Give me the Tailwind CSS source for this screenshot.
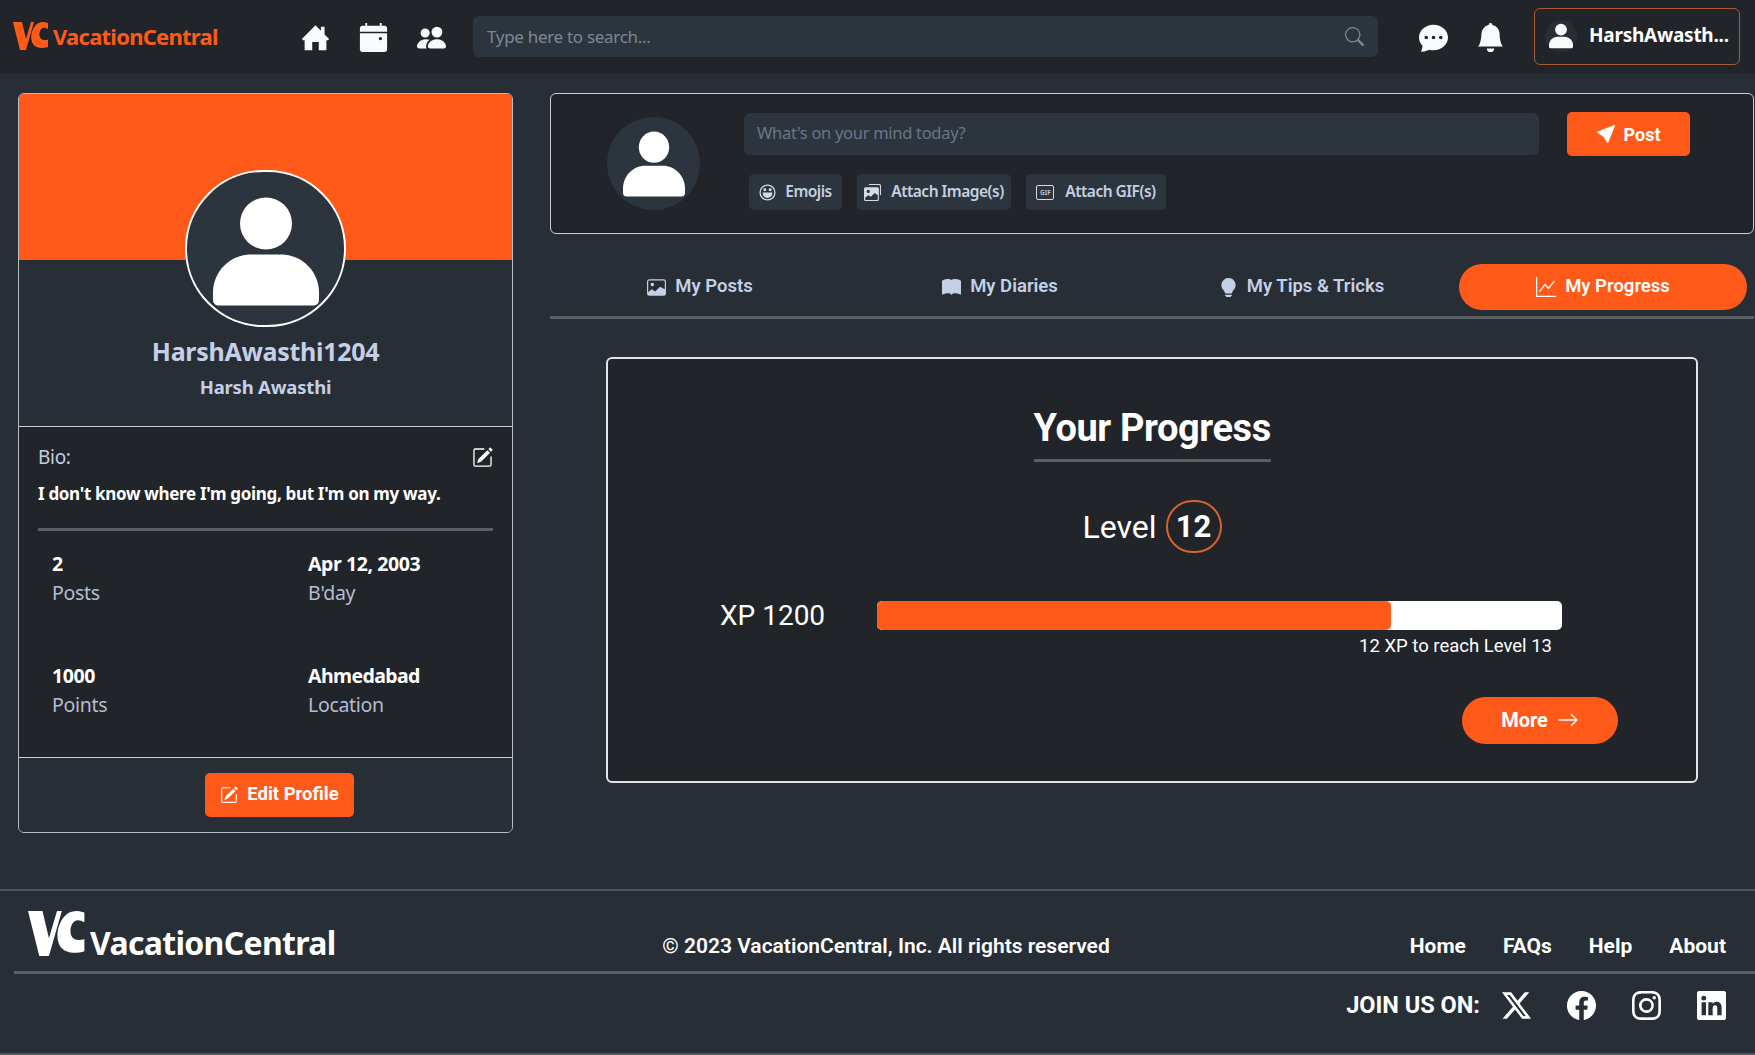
<!DOCTYPE html>
<html lang="en">
<head>
<meta charset="UTF-8" />
<title>VacationCentral - Profile</title>
<script src="https://cdn.jsdelivr.net/npm/@tailwindcss/browser@4"></script>
</head>
<body class="bg-[#282e36] font-['Noto_Sans',sans-serif] text-white">
<div class="w-[1755px] h-[1055px] overflow-hidden flex flex-col">

  <!-- navbar -->
  <header class="h-[74px] shrink-0 bg-[#212529] flex items-center pl-[13px] pr-[15px]">
    <a class="w-[288px] flex items-center text-[#ff5a1a]">
      <svg viewBox="0 0 36 30" class="w-[36px] h-[30px] shrink-0 -mt-[3px]" fill="currentColor">
        <path d="M0 1h9l4 17 5-17h3L13 29H7z"/>
        <path d="M35 2v6c-2-1-4-1.500-5-1-3 1-4 5-3.500 8 .5 3 3 5 8.500 3.500V26c-6 2-12 1-15-3-3-5-2-13 2-18 3-4 8-5 13-3z"/>
      </svg>
      <span class="ml-[4px] -mt-[2px] text-[22px] font-bold tracking-[-0.75px] leading-none">VacationCentral</span>
    </a>
    <nav class="flex items-center gap-[29px]">
      <svg viewBox="0 0 16 16" class="w-[29px] h-[29px]" fill="#f8fafc"><path d="M8 1.300 11 4.300V2h2v4.300l2.500 2.500-.7.700H14V15H9.800v-4.500H6.200V15H2V9.500h-.8l-.7-.7z"/></svg>
      <svg viewBox="0 0 16 16" class="w-[29px] h-[29px]" fill="#f8fafc"><path d="M3.500 0h1v1.500h7V0h1v1.500H14A1.500 1.500 0 0 1 15.500 3v1.800H.5V3A1.500 1.500 0 0 1 2 1.500h1.500zM.5 5.600h15V14.500A1.500 1.500 0 0 1 14 16H2a1.500 1.500 0 0 1-1.500-1.500zM11.800 7.700a.9.900 0 1 0 0 1.800.9.900 0 0 0 0-1.800z"/></svg>
      <svg viewBox="0 0 16 16" class="w-[29px] h-[29px]" fill="#f8fafc"><path d="M7 14s-1 0-1-1 1-4 5-4 5 3 5 4-1 1-1 1H7Zm4-6a3 3 0 1 0 0-6 3 3 0 0 0 0 6Zm-5.784 6A2.238 2.238 0 0 1 5 13c0-1.355.68-2.750 1.936-3.720A6.325 6.325 0 0 0 5 9c-4 0-5 3-5 4s1 1 1 1h4.216ZM4.500 8a2.500 2.500 0 1 0 0-5 2.500 2.500 0 0 0 0 5Z"/></svg>
    </nav>
    <div class="ml-[27px] -mt-[1px] w-[905px] h-[41px] bg-[#2c343e] rounded-[6px] flex items-center justify-between pl-[14px] pr-[14px]">
      <span class="text-[#7d8797] text-[17px] tracking-[-0.3px]">Type here to search...</span>
      <svg viewBox="0 0 16 16" class="w-[19px] h-[19px]" fill="#7d8797"><path d="M11.742 10.344a6.500 6.500 0 1 0-1.397 1.398h-.001c.03.04.062.078.098.115l3.850 3.850a1 1 0 0 0 1.415-1.414l-3.850-3.850a1.007 1.007 0 0 0-.115-.1zM12 6.500a5.500 5.500 0 1 1-11 0 5.500 5.500 0 0 1 11 0z"/></svg>
    </div>
    <svg viewBox="0 0 16 16" class="ml-[41px] w-[29px] h-[29px]" fill="#f8fafc"><path d="M16 8c0 3.866-3.582 7-8 7a9.060 9.060 0 0 1-2.347-.306c-.584.296-1.925.864-4.181 1.234-.2.032-.352-.176-.273-.362.354-.836.674-1.950.77-2.966C.744 11.370 0 9.760 0 8c0-3.866 3.582-7 8-7s8 3.134 8 7zM5 8a1 1 0 1 0-2 0 1 1 0 0 0 2 0zm4 0a1 1 0 1 0-2 0 1 1 0 0 0 2 0zm3 1a1 1 0 1 0 0-2 1 1 0 0 0 0 2z"/></svg>
    <svg viewBox="0 0 16 16" class="ml-[28px] w-[29px] h-[29px]" fill="#f8fafc"><path d="M8 16a2 2 0 0 0 2-2H6a2 2 0 0 0 2 2zm.995-14.901a1 1 0 1 0-1.990 0A5.002 5.002 0 0 0 3 6c0 1.098-.5 6-2 7h14c-1.500-1-2-5.902-2-7 0-2.420-1.720-4.440-4.005-4.901z"/></svg>
    <button class="ml-[29px] w-[206px] h-[57px] -mt-[2px] border border-[#a85a38] rounded-[6px] flex items-center pl-[10px]">
      <span class="w-[32px] h-[32px] rounded-full bg-[#282e36] flex items-center justify-center">
        <svg viewBox="0 0 106 110" class="w-[24px] h-[26px]" fill="#f8fafc"><circle cx="53" cy="27" r="26"/><path d="M0 103v-7C0 75 17 58 38 58h30c21 0 38 17 38 38v7q0 6-6 6H6q-6 0-6-6z"/></svg>
      </span>
      <span class="ml-[12px] text-[19px] font-bold tracking-[-0.25px] -mt-[2px]">HarshAwasth...</span>
    </button>
  </header>

  <!-- page body -->
  <main class="h-[815px] shrink-0 flex items-start pt-[19px] pl-[18px] pr-[1px] gap-[37px]">

    <!-- profile card -->
    <aside class="w-[495px] h-[740px] shrink-0 border border-[#b9bdc2] rounded-[6px] overflow-hidden flex flex-col">
      <div class="relative h-[166px] shrink-0 bg-[#ff5a1a]">
        <div class="absolute left-[166px] top-[76px] w-[161px] h-[157px] rounded-full border-2 border-white bg-[#2c343d] flex items-center justify-center">
          <svg viewBox="0 0 106 110" class="w-[106px] h-[111px] mt-[6px]" fill="white"><circle cx="53" cy="27" r="26"/><path d="M0 103v-7C0 75 17 58 38 58h30c21 0 38 17 38 38v7q0 6-6 6H6q-6 0-6-6z"/></svg>
        </div>
      </div>
      <div class="h-[167px] shrink-0 bg-[#282e36] flex flex-col items-center pt-[75px] border-b border-[#c9cdd1]">
        <div class="text-[25px] leading-[32px] font-bold text-[#c4d0e6] tracking-[-0.3px]">HarshAwasthi1204</div>
        <div class="mt-[8px] text-[18.500px] leading-[24px] font-bold text-[#c4d0e6] tracking-[-0.2px]">Harsh Awasthi</div>
      </div>
      <div class="h-[331px] shrink-0 bg-[#212529] px-[19px] pt-[17px] border-b border-[#c9cdd1]">
        <div class="flex items-center justify-between h-[26px]">
          <span class="text-[19px] text-[#c4cde0] tracking-[-0.3px]">Bio:</span>
          <svg viewBox="0 0 16 16" class="w-[21px] h-[21px] mt-[1px]" fill="white"><path d="M15.502 1.940a.5.5 0 0 1 0 .706L14.459 3.690l-2-2L13.502.646a.5.5 0 0 1 .707 0l1.293 1.293zm-1.750 2.456-2-2L4.939 9.210a.5.5 0 0 0-.121.196l-.805 2.414a.25.25 0 0 0 .316.316l2.414-.805a.5.5 0 0 0 .196-.12l6.813-6.814z"/><path d="M1 13.500A1.500 1.500 0 0 0 2.500 15h11a1.500 1.500 0 0 0 1.500-1.500v-6a.5.5 0 0 0-1 0v6a.5.5 0 0 1-.5.5h-11a.5.5 0 0 1-.5-.5v-11a.5.5 0 0 1 .5-.5H9a.5.5 0 0 0 0-1H2.500A1.500 1.500 0 0 0 1 2.500v11z"/></svg>
        </div>
        <p class="mt-[12px] text-[17px] leading-[24px] font-bold tracking-[-0.32px]">I don't know where I'm going, but I'm on my way.</p>
        <div class="mt-[22px] h-[3px] bg-[#5a5f64]"></div>
        <div class="mt-[19px] ml-[14px] grid grid-cols-[256px_1fr] gap-y-[54px]">
          <div>
            <div class="text-[19.500px] leading-[28px] font-bold tracking-[-0.4px]">2</div>
            <div class="text-[19.500px] leading-[30px] text-[#b4bdd0] tracking-[-0.3px]">Posts</div>
          </div>
          <div>
            <div class="text-[19.500px] leading-[28px] font-bold tracking-[-0.4px]">Apr 12, 2003</div>
            <div class="text-[19.500px] leading-[30px] text-[#b4bdd0] tracking-[-0.3px]">B'day</div>
          </div>
          <div>
            <div class="text-[19.500px] leading-[28px] font-bold tracking-[-0.4px]">1000</div>
            <div class="text-[19.500px] leading-[30px] text-[#b4bdd0] tracking-[-0.3px]">Points</div>
          </div>
          <div>
            <div class="text-[19.500px] leading-[28px] font-bold tracking-[-0.6px]">Ahmedabad</div>
            <div class="text-[19.500px] leading-[30px] text-[#b4bdd0] tracking-[-0.3px]">Location</div>
          </div>
        </div>
      </div>
      <div class="flex-1 bg-[#282e36] flex items-center pl-[186px]">
        <button class="w-[149px] h-[44px] rounded-[5px] bg-[#ff5a1a] flex items-center justify-center gap-[9px] font-['Roboto',sans-serif] font-bold text-[18.500px]">
          <svg viewBox="0 0 16 16" class="w-[18px] h-[18px]" fill="white"><path d="M15.502 1.940a.5.5 0 0 1 0 .706L14.459 3.690l-2-2L13.502.646a.5.5 0 0 1 .707 0l1.293 1.293zm-1.750 2.456-2-2L4.939 9.210a.5.5 0 0 0-.121.196l-.805 2.414a.25.25 0 0 0 .316.316l2.414-.805a.5.5 0 0 0 .196-.12l6.813-6.814z"/><path d="M1 13.500A1.500 1.500 0 0 0 2.500 15h11a1.500 1.500 0 0 0 1.500-1.500v-6a.5.5 0 0 0-1 0v6a.5.5 0 0 1-.5.5h-11a.5.5 0 0 1-.5-.5v-11a.5.5 0 0 1 .5-.5H9a.5.5 0 0 0 0-1H2.500A1.500 1.500 0 0 0 1 2.500v11z"/></svg>
          Edit Profile
        </button>
      </div>
    </aside>

    <section class="flex-1 min-w-0">
      <!-- composer -->
      <div class="h-[141px] bg-[#212529] border border-[#c9cdd1] rounded-[6px] flex pl-[56px] pt-[18px]">
        <div class="w-[93px] h-[93px] mt-[5px] shrink-0 rounded-full bg-[#2c343d] flex items-center justify-center">
          <svg viewBox="0 0 106 110" class="w-[62px] h-[66px]" preserveAspectRatio="none" fill="white"><circle cx="53" cy="27" r="26"/><path d="M0 103v-7C0 75 17 58 38 58h30c21 0 38 17 38 38v7q0 6-6 6H6q-6 0-6-6z"/></svg>
        </div>
        <div class="ml-[44px] flex-1">
          <div class="flex items-start">
            <div class="w-[795px] h-[42px] mt-[1px] rounded-[6px] bg-[#2c343e] flex items-center pl-[13px] pb-[2px] text-[#6b7686] text-[16.500px] tracking-[-0.3px]">What's on your mind today?</div>
            <button class="ml-[28px] w-[123px] h-[44px] rounded-[5px] bg-[#ff5a1a] flex items-center justify-center gap-[9px] font-['Roboto',sans-serif] font-bold text-[18px]">
              <svg viewBox="0 0 16 16" class="w-[18px] h-[18px]" fill="white"><path d="M15.964.686a.5.5 0 0 0-.65-.65L.767 5.855H.766l-.452.180a.5.5 0 0 0-.082.887l.41.26.001.002 4.995 3.178 3.178 4.995.002.002.26.41a.5.5 0 0 0 .886-.083l6-15Z"/></svg>
              Post
            </button>
          </div>
          <div class="mt-[18px] ml-[5px] flex gap-[15px] text-[15.500px] font-semibold text-[#c4d0e0] tracking-[-0.5px]">
            <div class="w-[93px] h-[36px] rounded-[5px] bg-[#2c343e] flex items-center justify-center gap-[9px]">
              <svg viewBox="0 0 16 16" class="w-[17px] h-[17px]" fill="none" stroke="#d5dce6" stroke-width="1.200"><circle cx="8" cy="8" r="7"/><path d="M4 8.500h8a4 4 0 0 1-8 0z" fill="#d5dce6"/><circle cx="5.500" cy="5.500" r=".8" fill="#d5dce6"/><circle cx="10.500" cy="5.500" r=".8" fill="#d5dce6"/></svg>
              Emojis
            </div>
            <div class="w-[154px] h-[36px] rounded-[5px] bg-[#2c343e] flex items-center justify-center gap-[10px]">
              <svg viewBox="0 0 16 16" class="w-[17px] h-[17px]" fill="#d5dce6"><path d="M4 1.500A1.500 1.500 0 0 1 5.500 0h9A1.500 1.500 0 0 1 16 1.500v8a1.500 1.500 0 0 1-1 1.400V2a1 1 0 0 0-1-1H4.100z"/><path d="M1.500 3A1.500 1.500 0 0 0 0 4.500v10A1.500 1.500 0 0 0 1.500 16h11a1.500 1.500 0 0 0 1.500-1.500v-10A1.500 1.500 0 0 0 12.500 3zM4 5.500a1.500 1.500 0 1 1 0 3 1.500 1.500 0 0 1 0-3zM1 13l3-2.500 2.500 1.500L10 8.500l3 2V14a1 1 0 0 1-1 1H2a1 1 0 0 1-1-1z"/></svg>
              Attach Image(s)
            </div>
            <div class="w-[140px] h-[36px] rounded-[5px] bg-[#2c343e] flex items-center justify-center gap-[11px]">
              <span class="w-[18px] h-[15px] border border-[#d5dce6] rounded-[2px] text-[6.500px] leading-[13px] text-center tracking-normal">GIF</span>
              Attach GIF(s)
            </div>
          </div>
        </div>
      </div>

      <!-- tabs -->
      <div class="mt-[30px] h-[55px] border-b-[3px] border-[#5a5f64] flex font-['Roboto',sans-serif] font-semibold text-[18.500px] text-[#c4d0e6]">
        <div class="w-[300px] h-[46px] flex items-center justify-center gap-[9px]">
          <svg viewBox="0 0 16 16" class="w-[19px] h-[19px]" fill="currentColor"><path d="M.002 3a2 2 0 0 1 2-2h12a2 2 0 0 1 2 2v10a2 2 0 0 1-2 2h-12a2 2 0 0 1-2-2V3zm1 9 2.650-2.350a.5.5 0 0 1 .63-.062l2.660 1.772 3.710-3.710a.5.5 0 0 1 .577-.093L15.002 9.500V3a1 1 0 0 0-1-1h-12a1 1 0 0 0-1 1zm5-6.500a1.500 1.500 0 1 0-3 0 1.500 1.500 0 0 0 3 0z"/></svg>
          My Posts
        </div>
        <div class="w-[300px] h-[46px] flex items-center justify-center gap-[9px]">
          <svg viewBox="0 0 16 16" class="w-[19px] h-[19px]" fill="currentColor"><path d="M8 1.783C7.015.936 5.587.81 4.287.94c-1.514.153-3.042.672-3.994 1.105A.5.5 0 0 0 0 2.500v11a.5.5 0 0 0 .707.455c.882-.4 2.303-.881 3.680-1.020 1.409-.142 2.590.087 3.223.877a.5.5 0 0 0 .78 0c.633-.79 1.814-1.019 3.222-.877 1.378.139 2.800.62 3.681 1.020A.5.5 0 0 0 16 13.500v-11a.5.5 0 0 0-.293-.455c-.952-.433-2.480-.952-3.994-1.105C10.413.809 8.985.936 8 1.783z"/></svg>
          My Diaries
        </div>
        <div class="w-[303px] h-[46px] flex items-center justify-center gap-[9px]">
          <svg viewBox="0 0 16 16" class="w-[19px] h-[19px]" fill="currentColor"><path d="M2 6a6 6 0 1 1 10.174 4.310c-.203.196-.359.4-.453.619l-.762 1.769A.5.5 0 0 1 10.500 13h-5a.5.5 0 0 1-.46-.302l-.761-1.770a1.964 1.964 0 0 0-.453-.618A5.984 5.984 0 0 1 2 6zm3 8.500a.5.5 0 0 1 .5-.5h5a.5.5 0 0 1 0 1l-.224.447a1 1 0 0 1-.894.553H6.618a1 1 0 0 1-.894-.553L5.500 15a.5.5 0 0 1-.5-.5z"/></svg>
          My Tips &amp; Tricks
        </div>
        <div class="w-[288px] h-[46px] ml-[6px] rounded-full bg-[#ff5a1a] text-white flex items-center justify-center gap-[9px]">
          <svg viewBox="0 0 16 16" class="w-[20px] h-[20px]" fill="white"><path d="M0 0h1v15h15v1H0V0Zm14.817 3.113a.5.5 0 0 1 .07.704l-4.500 5.500a.5.5 0 0 1-.74.037L7.060 6.767l-3.656 5.027a.5.5 0 0 1-.808-.588l4-5.500a.5.5 0 0 1 .758-.06l2.609 2.610 4.150-5.073a.5.5 0 0 1 .704-.07Z"/></svg>
          My Progress
        </div>
      </div>

      <!-- progress card -->
      <div class="mt-[38px] ml-[56px] w-[1092px] h-[426px] bg-[#212529] border-2 border-[#e2e4e6] rounded-[6px] font-['Roboto',sans-serif] flex flex-col">
        <div class="mt-[47px] mx-auto w-[237px] border-b-[3px] border-[#5a5f64] pb-[9px] text-center text-[38px] leading-[44px] font-bold tracking-[-0.4px] whitespace-nowrap">Your Progress</div>
        <div class="mt-[38px] flex items-center justify-center text-[32px] leading-none">
          <span>Level</span>
          <span class="ml-[9px] w-[56px] h-[53px] rounded-full border-2 border-[#d9622e] flex items-center justify-center font-bold text-[31px]">12</span>
        </div>
        <div class="mt-[48px] flex items-center pl-[112px]">
          <span class="w-[157px] text-[28px] leading-none">XP 1200</span>
          <div class="w-[685px] h-[29px] rounded-[5px] bg-white overflow-hidden">
            <div class="h-full rounded-[5px] bg-[#ff5a1a]" style="width: 75%"></div>
          </div>
        </div>
        <div class="mt-[3px] pr-[144px] text-right text-[18.500px] leading-[26px]">12 XP to reach Level 13</div>
        <button class="mt-[38px] ml-[854px] w-[156px] h-[47px] rounded-full bg-[#ff5a1a] flex items-center justify-center gap-[9px] pb-[2px] font-bold text-[20px]">
          More
          <svg viewBox="0 0 16 16" class="w-[22px] h-[22px]" fill="white"><path d="M1 8a.5.5 0 0 1 .5-.5h11.793l-3.147-3.146a.5.5 0 0 1 .708-.708l4 4a.5.5 0 0 1 0 .708l-4 4a.5.5 0 0 1-.708-.708L13.293 8.500H1.500A.5.5 0 0 1 1 8z"/></svg>
        </button>
      </div>
    </section>
  </main>

  <!-- footer -->
  <footer class="flex-1 border-t-2 border-[#4e545b] border-b-2 font-['Roboto',sans-serif]">
    <div class="h-[83px] ml-[14px] border-b-[3px] border-[#5a5f64] flex items-start">
      <a class="w-[644px] pl-[14px] pt-[18px] flex items-end">
        <svg viewBox="0 0 36 30" class="w-[58px] h-[49px] shrink-0 mb-[2px]" fill="white">
          <path d="M0 1h9l4 17 5-17h3L13 29H7z"/>
          <path d="M35 2v6c-2-1-4-1.500-5-1-3 1-4 5-3.500 8 .5 3 3 5 8.500 3.500V26c-6 2-12 1-15-3-3-5-2-13 2-18 3-4 8-5 13-3z"/>
        </svg>
        <span class="ml-[4px] -mb-[1px] font-['Noto_Sans',sans-serif] text-[32px] leading-[36px] font-bold tracking-[-0.7px]">VacationCentral</span>
      </a>
      <div class="mt-[42px] w-[456px] text-center text-[21px] leading-[26px] font-semibold whitespace-nowrap">© 2023 VacationCentral, Inc. All rights reserved</div>
      <nav class="ml-auto mr-[29px] mt-[42px] flex gap-[37px] text-[21px] leading-[26px] font-bold">
        <a>Home</a><a>FAQs</a><a>Help</a><a>About</a>
      </nav>
    </div>
    <div class="h-[62px] pr-[29px] flex items-center justify-end">
      <span class="mr-[22px] mt-[2px] text-[23.500px] font-bold">JOIN US ON:</span>
      <div class="flex items-center gap-[36px]">
        <svg viewBox="0 0 16 16" class="w-[29px] h-[29px]" fill="white"><path d="M12.600.75h2.454l-5.360 6.142L16 15.250h-4.937l-3.867-5.070-4.425 5.070H.316l5.733-6.570L0 .75h5.063l3.495 4.633L12.601.75Zm-.86 13.028h1.360L4.323 2.145H2.865l8.875 11.633Z"/></svg>
        <svg viewBox="0 0 16 16" class="w-[29px] h-[29px]" fill="white"><path d="M16 8.049c0-4.446-3.582-8.050-8-8.050C3.580 0-.002 3.603-.002 8.050c0 4.017 2.926 7.347 6.750 7.951v-5.625h-2.030V8.050H6.750V6.275c0-2.017 1.195-3.131 3.022-3.131.876 0 1.791.157 1.791.157v1.980h-1.009c-.993 0-1.303.621-1.303 1.258v1.510h2.218l-.354 2.326H9.250V16c3.824-.604 6.750-3.934 6.750-7.951z"/></svg>
        <svg viewBox="0 0 16 16" class="w-[29px] h-[29px]" fill="white"><path d="M8 0C5.829 0 5.556.01 4.703.048 3.850.088 3.269.222 2.760.42a3.917 3.917 0 0 0-1.417.923A3.927 3.927 0 0 0 .42 2.760C.222 3.268.087 3.850.048 4.700.01 5.555 0 5.827 0 8.001c0 2.172.01 2.444.048 3.297.04.852.174 1.433.372 1.942.205.526.478.972.923 1.417.444.445.89.719 1.416.923.51.198 1.090.333 1.942.372C5.555 15.990 5.827 16 8 16s2.444-.01 3.298-.048c.851-.04 1.434-.174 1.943-.372a3.916 3.916 0 0 0 1.416-.923c.445-.445.718-.891.923-1.417.197-.509.332-1.090.372-1.942C15.990 10.445 16 10.173 16 8s-.01-2.445-.048-3.299c-.04-.851-.175-1.433-.372-1.941a3.926 3.926 0 0 0-.923-1.417A3.911 3.911 0 0 0 13.240.42c-.51-.198-1.092-.333-1.943-.372C10.443.01 10.172 0 7.998 0h.003zm-.717 1.442h.718c2.136 0 2.389.007 3.232.046.78.035 1.204.166 1.486.275.373.145.64.319.92.599.28.28.453.546.598.92.11.281.24.705.275 1.485.039.843.047 1.096.047 3.231s-.008 2.389-.047 3.232c-.035.78-.166 1.203-.275 1.485a2.470 2.470 0 0 1-.599.919c-.28.28-.546.453-.92.598-.28.11-.704.24-1.485.276-.843.038-1.096.047-3.232.047s-2.390-.009-3.233-.047c-.78-.036-1.203-.166-1.485-.276a2.478 2.478 0 0 1-.92-.598 2.480 2.480 0 0 1-.6-.92c-.109-.281-.24-.705-.275-1.485-.038-.843-.046-1.096-.046-3.233 0-2.136.008-2.388.046-3.231.036-.78.166-1.204.276-1.486.145-.373.319-.64.599-.92.28-.28.546-.453.92-.598.282-.11.705-.24 1.485-.276.738-.034 1.024-.044 2.515-.045v.002zm4.988 1.328a.96.960 0 1 0 0 1.920.96.960 0 0 0 0-1.920zm-4.270 1.122a4.109 4.109 0 1 0 0 8.217 4.109 4.109 0 0 0 0-8.217zm0 1.441a2.667 2.667 0 1 1 0 5.334 2.667 2.667 0 0 1 0-5.334z"/></svg>
        <svg viewBox="0 0 16 16" class="w-[29px] h-[29px]" fill="white"><path d="M0 1.146C0 .513.526 0 1.175 0h13.650C15.474 0 16 .513 16 1.146v13.708c0 .633-.526 1.146-1.175 1.146H1.175C.526 16 0 15.487 0 14.854V1.146zm4.943 12.248V6.169H2.542v7.225h2.401zm-1.200-8.212c.837 0 1.358-.554 1.358-1.248-.015-.709-.52-1.248-1.342-1.248-.822 0-1.359.54-1.359 1.248 0 .694.521 1.248 1.327 1.248h.016zm4.908 8.212V9.359c0-.216.016-.432.08-.586.173-.431.568-.878 1.232-.878.869 0 1.216.662 1.216 1.634v3.865h2.401V9.250c0-2.220-1.184-3.252-2.764-3.252-1.274 0-1.845.7-2.165 1.193v.025h-.016a5.540 5.540 0 0 1 .016-.025V6.169h-2.400c.03.678 0 7.225 0 7.225h2.400z"/></svg>
      </div>
    </div>
  </footer>
</div>
</body>
</html>
